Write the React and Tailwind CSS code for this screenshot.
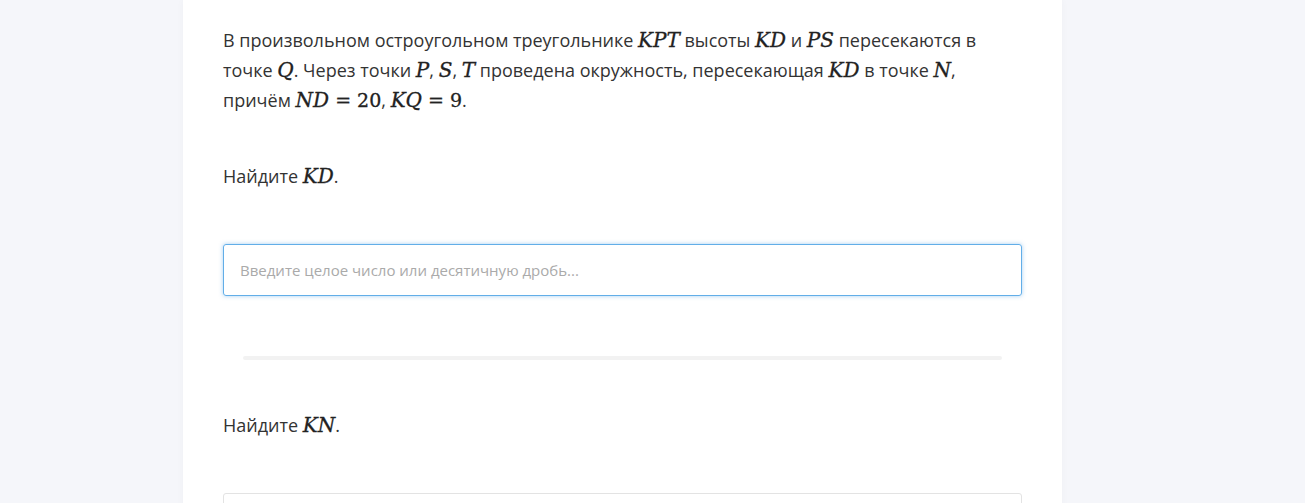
const M = ({ children }) => (
  <span className="font-['DejaVu_Serif',serif] text-[20px] italic text-[#222] [-webkit-text-stroke:0.3px_#222]">
    {children}
  </span>
);

const N = ({ children }) => (
  <span className="font-['DejaVu_Serif',serif] text-[19px] text-[#222] [-webkit-text-stroke:0.3px_#222]">
    {children}
  </span>
);

export default function App() {
  return (
    <main className="min-h-screen bg-[#f5f6fa] font-['Open_Sans',sans-serif] text-[18px] leading-[30px] text-[#333]">
      <section className="ml-[183px] w-[879px] bg-white px-10 pt-[25px] pb-10 shadow-[0_0_8px_rgba(0,0,0,0.03)]">
        <p>
          В произвольном остроугольном треугольнике <M>KPT</M> высоты <M>KD</M> и <M>PS</M> пересекаются в
          точке <M>Q</M>. Через точки <M>P</M>, <M>S</M>, <M>T</M> проведена окружность, пересекающая <M>KD</M> в
          точке <M>N</M>, причём{" "}
          <span className="whitespace-nowrap">
            <M>ND</M>
            <N> = 20</N>, <M>KQ</M>
            <N> = 9</N>
          </span>
          .
        </p>

        <p className="mt-[46px]">
          Найдите <M>KD</M>.
        </p>

        <input
          type="text"
          autoFocus
          placeholder="Введите целое число или десятичную дробь..."
          className="mt-[53px] block h-[52px] w-full rounded-[3px] border border-[#62aee8] px-4 text-[15px] text-[#333] shadow-[0_0_4px_rgba(80,160,230,0.5)] outline-none placeholder:text-[#aaa]"
        />

        <div className="mx-5 mt-[60px] h-1 rounded bg-[#f2f2f2]" />

        <p className="mt-[50px]">
          Найдите <M>KN</M>.
        </p>

        <input
          type="text"
          className="mt-[53px] block h-[52px] w-full rounded-[3px] border border-[#e3e3e3] px-4 text-[15px] outline-none"
        />
      </section>
    </main>
  );
}
